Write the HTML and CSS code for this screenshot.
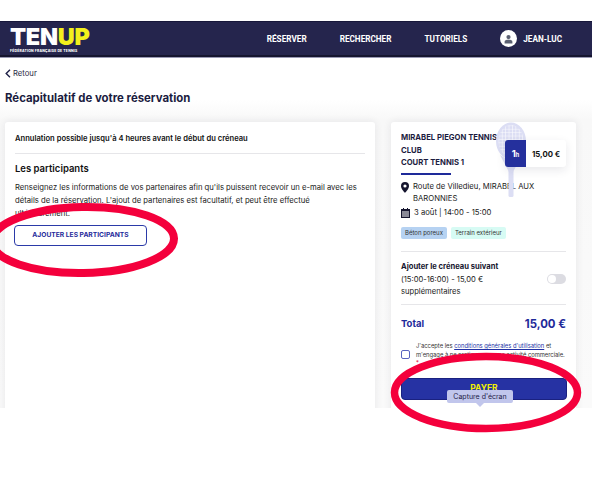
FILE: index.html
```html
<!DOCTYPE html>
<html lang="fr">
<head>
<meta charset="utf-8">
<title>Récapitulatif de votre réservation</title>
<link rel="stylesheet" href="styles.css">
</head>
<body>
<div class="stage">
  <div class="screen">
    <header class="topbar">
      <div class="logo">
        <div class="logo-word"><span class="ten">TEN</span><span class="up">UP</span></div>
        <div class="logo-sub">FÉDÉRATION FRANÇAISE DE TENNIS</div>
      </div>
      <nav class="nav">
        <a class="nav-link">RÉSERVER</a>
        <a class="nav-link">RECHERCHER</a>
        <a class="nav-link">TUTORIELS</a>
        <a class="nav-link nav-user">
          <span class="avatar">
            <svg width="9" height="10" viewBox="0 0 12 12"><circle cx="6" cy="3.400" r="2.800" fill="#5b6072"/><path d="M.8 12V9.600c0-1.600 2-2.500 5.200-2.500s5.200.9 5.200 2.500V12z" fill="#5b6072"/></svg>
          </span>
          JEAN-LUC
        </a>
      </nav>
    </header>

    <main class="page">
      <a class="back">
        <svg width="6" height="9" viewBox="0 0 6 9"><path d="M5 .8 1.200 4.500 5 8.200" fill="none" stroke="#1f2148" stroke-width="1.400"/></svg>
        Retour
      </a>
      <h1 class="title">Récapitulatif de votre réservation</h1>

      <div class="columns">
        <section class="card card-main">
          <p class="notice">Annulation possible jusqu'à 4 heures avant le début du créneau</p>
          <hr class="rule">
          <h2 class="subtitle">Les participants</h2>
          <p class="body-text">Renseignez les informations de vos partenaires afin qu'ils puissent recevoir un e-mail avec les détails de la réservation. L'ajout de partenaires est facultatif, et peut être effectué<br>ultérieurement.</p>
          <button class="btn-outline">AJOUTER LES PARTICIPANTS</button>
        </section>

        <aside class="card card-side">
          <div class="club">
            <div class="club-name">MIRABEL PIEGON TENNIS<br>CLUB<br>COURT TENNIS 1</div>
            <svg class="racket" width="32" height="76" viewBox="0 0 32 76">
              <defs>
                <pattern id="strings" width="3.400" height="3.400" patternUnits="userSpaceOnUse">
                  <path d="M0 0H3.400M0 0V3.400" stroke="#fff" stroke-width="1"/>
                </pattern>
              </defs>
              <ellipse cx="16" cy="19" rx="15" ry="18.500" fill="#dcdef4"/>
              <ellipse cx="16" cy="19" rx="12.500" ry="16" fill="url(#strings)"/>
              <path d="M5 33 14 50H18L27 33 22 36 16 45 10 36z" fill="#dcdef4"/>
              <rect x="13.500" y="48" width="5" height="27" rx="1.500" fill="#dcdef4"/>
            </svg>
            <div class="chip"><span class="chip-time">1<small>h</small></span><span class="chip-price">15,00 €</span></div>
          </div>
          <div class="accent"></div>
          <div class="info-row">
            <svg width="8" height="11" viewBox="0 0 8 11"><path fill-rule="evenodd" d="M4 0a4 4 0 0 1 4 4c0 2.500-2.800 5.500-4 7-1.200-1.500-4-4.500-4-7a4 4 0 0 1 4-4zm0 2.400a1.600 1.600 0 1 0 0 3.200 1.600 1.600 0 0 0 0-3.200z" fill="#15152e"/></svg>
            <span>Route de Villedieu, MIRABEL AUX BARONNIES</span>
          </div>
          <div class="info-row date-row">
            <svg width="9" height="10" viewBox="0 0 9 10"><path fill-rule="evenodd" d="M2 0h1v1h3V0h1v1h2v9H0V1h2zM1 3.500h7v1H1zm0 2h7v1H1zm0 2h7v1H1z" fill="#15152e"/></svg>
            <span>3 août | 14:00 - 15:00</span>
          </div>
          <div class="tags">
            <span class="tag tag-blue">Béton poreux</span>
            <span class="tag tag-mint">Terrain extérieur</span>
          </div>
          <hr class="rule rule-side">
          <div class="next">
            <p class="next-text"><strong>Ajouter le créneau suivant</strong><br>(15:00-16:00) - 15,00 € supplémentaires</p>
            <span class="toggle"><span class="knob"></span></span>
          </div>
          <hr class="rule rule-side2">
          <div class="total"><span class="total-label">Total</span><span class="total-value">15,00 €</span></div>
          <div class="terms">
            <span class="checkbox"></span>
            <p class="terms-text">J'accepte les <a class="terms-link">conditions générales d'utilisation</a> et<br>m'engage à ne pratiquer aucune activité commerciale.<br><span class="req">*</span></p>
          </div>
          <button class="btn-pay">PAYER</button>
        </aside>
      </div>
    </main>
  </div>

  <div class="tooltip">Capture d'écran</div>
  <svg class="marks" width="600" height="488" viewBox="0 0 600 488">
    <ellipse cx="83" cy="240" rx="91" ry="33" transform="rotate(-1 83 240)" fill="none" stroke="#f4003c" stroke-width="8"/>
    <ellipse cx="486" cy="392.500" rx="91.500" ry="36" fill="none" stroke="#f4003c" stroke-width="7.500"/>
  </svg>
</div>
</body>
</html>
```
FILE: styles.css
```css
* { box-sizing: border-box; }
html, body { margin: 0; padding: 0; background: #fff; }
body { font-family: Inter, "Liberation Sans", sans-serif; color: #15152e; }
p, h1, h2 { margin: 0; }
a { color: inherit; text-decoration: none; }

.stage { position: relative; width: 600px; height: 488px; overflow: hidden; background: #fff; }
.screen { width: 592px; height: 408px; padding-top: 21px; overflow: hidden; background: linear-gradient(#fff 0, #fff 100px, #f8f8f8 120px, #fafafa 100%); }

.topbar { height: 36px; padding: 0 30px 0 10px; display: flex; align-items: center; justify-content: space-between; background: #25254d; border-top: 1px solid #17173a; border-bottom: 2px solid #15152f; box-shadow: 0 1px 0 #9a9ab4; }
.logo { display: flex; flex-direction: column; width: 80px; margin-top: 4px; }
.logo-word { font: 900 23.500px/18px Inter, sans-serif; letter-spacing: -.3px; }
.ten { color: #fff; }
.up { color: #f3f01c; }
.logo-sub { font: 800 3.400px/4px Inter, sans-serif; color: #fff; white-space: nowrap; letter-spacing: .22px; margin-top: 3px; }

.nav { display: flex; align-items: center; gap: 33px; }
.nav-link { font: 700 8.200px/12px Roboto, sans-serif; color: #fff; white-space: nowrap; }
.nav-user { display: flex; align-items: center; gap: 6px; }
.avatar { width: 17px; height: 17px; border-radius: 50%; background: #fff; display: flex; align-items: center; justify-content: center; }

.page { padding: 0 5px; }
.back { display: flex; align-items: center; gap: 2px; margin-top: 10px; height: 12px; font-size: 7.700px; color: #2b2b45; }
.title { margin-top: 11px; font-size: 11.400px; line-height: 16px; font-weight: 700; color: #1b1c40; }

.columns { display: flex; gap: 16px; margin-top: 16px; align-items: flex-start; }
.card { background: #fff; border-radius: 3px; box-shadow: 0 0 8px rgba(30, 30, 60, .09); height: 300px; }
.card-main { width: 370px; padding: 11px 10px; }
.notice { font-size: 7.600px; line-height: 11px; font-weight: 600; color: #111; }
.rule { border: 0; border-top: 1px solid #e6e6e9; margin: 9px 0 0; }
.subtitle { margin-top: 8px; font-size: 9.500px; line-height: 14px; font-weight: 600; color: #111; }
.body-text { margin-top: 5px; font-size: 7.700px; line-height: 13px; color: #222; }
.btn-outline { display: block; margin: 5px 0 0 -1px; width: 133px; height: 21px; padding: 0; background: #fff; border: 1px solid #2b3aa8; border-radius: 4px; font: 700 6.700px/1 Inter, sans-serif; color: #1e2a9a; }

.card-side { width: 185px; padding: 10px 10px 0; }
.club { position: relative; height: 38px; }
.racket { position: absolute; left: 94px; top: -10px; }
.club-name { white-space: nowrap; font-size: 7.700px; line-height: 12.500px; font-weight: 700; color: #1b1c40; }
.chip { position: absolute; right: 0; top: 8px; width: 61px; height: 27px; display: flex; background: #fff; border-radius: 3px; box-shadow: 0 3px 10px rgba(30, 30, 60, .1); }
.chip-time { width: 21px; background: #25309d; border-radius: 3px 0 0 3px; color: #fff; font-size: 9.500px; font-weight: 700; display: flex; align-items: center; justify-content: center; }
.chip-time small { font-size: 5.500px; margin-top: 2px; }
.chip-price { flex: 1; display: flex; align-items: center; justify-content: center; font-size: 7.800px; font-weight: 700; color: #111; }
.accent { width: 50px; height: 1.500px; background: #1e2a9a; margin-top: 3px; }

.info-row { display: flex; gap: 3px; margin-top: 6px; font-size: 7.700px; line-height: 12.500px; color: #222; }
.info-row svg { flex: none; margin-top: 1px; margin-right: 1px; }
.date-row { margin-top: 1px; }
.tags { display: flex; gap: 4px; margin-top: 8px; }
.tag { height: 12px; padding: 0 4px; border-radius: 2px; font-size: 6px; line-height: 12px; color: #333; white-space: nowrap; }
.tag-blue { background: #b6d2f2; }
.tag-mint { background: #d7fbf4; }

.rule-side { margin-top: 12px; }
.next { display: flex; align-items: center; justify-content: space-between; margin-top: 9px; }
.next-text { width: 135px; font-size: 7.600px; line-height: 12.700px; color: #222; }
.next-text strong { font-weight: 700; color: #15152e; }
.toggle { width: 19px; height: 10px; border-radius: 5px; background: #dcdce2; padding: 1px; margin-top: -2px; display: flex; }
.knob { width: 8px; height: 8px; border-radius: 50%; background: #fff; }
.rule-side2 { margin-top: 5px; }
.total { display: flex; justify-content: space-between; align-items: center; margin-top: 10px; height: 17px; color: #1e2a9a; font-weight: 700; }
.total-label { font-size: 9.500px; }
.total-value { font-size: 11.400px; }
.terms { display: flex; align-items: center; gap: 6px; margin-top: 10px; }
.checkbox { flex: none; width: 9px; height: 9px; border: 1px solid #5a64c0; border-radius: 2px; }
.terms-text { font-size: 5.800px; line-height: 8.500px; color: #333; white-space: nowrap; }
.terms-link { color: #2232a6; text-decoration: underline; }
.req { color: #e00030; }
.btn-pay { display: block; margin-top: 10px; width: 166px; height: 22px; padding: 0; border: 1px solid #1a2180; border-radius: 4px; background: #2632a3; color: #f2f000; font: 700 8.500px/1 Inter, sans-serif; }

.tooltip { position: absolute; left: 447px; top: 390px; width: 66px; height: 13px; background: #c1c6ec; border-radius: 2px; font: 7px/13px Inter, sans-serif; color: #1f2148; text-align: center; }
.tooltip::after { content: ""; position: absolute; left: 29px; top: 13px; border: 4px solid transparent; border-top-color: #c1c6ec; border-bottom: 0; }
.marks { position: absolute; left: 0; top: 0; pointer-events: none; }
```
